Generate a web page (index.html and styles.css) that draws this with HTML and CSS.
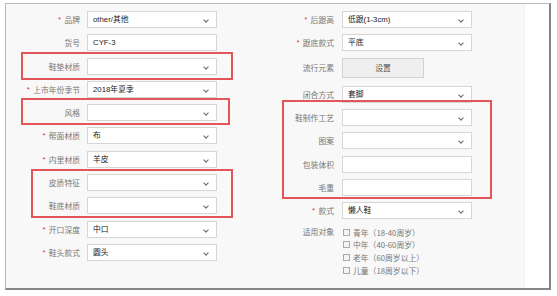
FILE: index.html
```html
<!DOCTYPE html>
<html lang="zh-CN">
<head>
    <meta charset="UTF-8">
    <title>商品属性</title>
    <link rel="stylesheet" href="styles.css">
</head>
<body>
    <div class="panel">
        <div class="form-area">

            <!-- left column -->
            <div class="col col-left">
                <div class="row">
                    <span class="label"><b class="req">*</b>品牌</span>
                    <div class="field select">other/其他<i class="caret"></i></div>
                </div>
                <div class="row">
                    <span class="label">货号</span>
                    <div class="field">CYF-3</div>
                </div>
                <div class="marked mark-1">
                    <div class="row">
                        <span class="label">鞋垫材质</span>
                        <div class="field select"><i class="caret"></i></div>
                    </div>
                </div>
                <div class="row">
                    <span class="label"><b class="req">*</b>上市年份季节</span>
                    <div class="field select">2018年夏季<i class="caret"></i></div>
                </div>
                <div class="marked mark-2">
                    <div class="row">
                        <span class="label">风格</span>
                        <div class="field select"><i class="caret"></i></div>
                    </div>
                </div>
                <div class="row">
                    <span class="label"><b class="req">*</b>帮面材质</span>
                    <div class="field select">布<i class="caret"></i></div>
                </div>
                <div class="row">
                    <span class="label"><b class="req">*</b>内里材质</span>
                    <div class="field select">羊皮<i class="caret"></i></div>
                </div>
                <div class="marked mark-3">
                    <div class="row">
                        <span class="label">皮质特征</span>
                        <div class="field select"><i class="caret"></i></div>
                    </div>
                    <div class="row">
                        <span class="label">鞋底材质</span>
                        <div class="field select"><i class="caret"></i></div>
                    </div>
                </div>
                <div class="row">
                    <span class="label"><b class="req">*</b>开口深度</span>
                    <div class="field select">中口<i class="caret"></i></div>
                </div>
                <div class="row">
                    <span class="label"><b class="req">*</b>鞋头款式</span>
                    <div class="field select">圆头<i class="caret"></i></div>
                </div>
            </div>

            <!-- right column -->
            <div class="col col-right">
                <div class="row">
                    <span class="label"><b class="req">*</b>后跟高</span>
                    <div class="field select">低跟(1-3cm)<i class="caret"></i></div>
                </div>
                <div class="row">
                    <span class="label"><b class="req">*</b>跟底款式</span>
                    <div class="field select">平底<i class="caret"></i></div>
                </div>
                <div class="row row-btn">
                    <span class="label">流行元素</span>
                    <div><button class="btn">设置</button></div>
                </div>
                <div class="row">
                    <span class="label">闭合方式</span>
                    <div class="field select">套脚<i class="caret"></i></div>
                </div>
                <div class="marked mark-4">
                    <div class="row">
                        <span class="label">鞋制作工艺</span>
                        <div class="field select"><i class="caret"></i></div>
                    </div>
                    <div class="row">
                        <span class="label">图案</span>
                        <div class="field select"><i class="caret"></i></div>
                    </div>
                    <div class="row">
                        <span class="label">包装体积</span>
                        <div class="field"></div>
                    </div>
                    <div class="row">
                        <span class="label">毛重</span>
                        <div class="field"></div>
                    </div>
                </div>
                <div class="row">
                    <span class="label"><b class="req">*</b>款式</span>
                    <div class="field select">懒人鞋<i class="caret"></i></div>
                </div>
                <div class="row row-checks">
                    <span class="label">适用对象</span>
                    <div class="checks">
                        <div class="check"><span class="box"></span>青年（18-40周岁）</div>
                        <div class="check"><span class="box"></span>中年（40-60周岁）</div>
                        <div class="check"><span class="box"></span>老年（60周岁以上）</div>
                        <div class="check"><span class="box"></span>儿童（18周岁以下）</div>
                    </div>
                </div>
            </div>

        </div>
        <div class="side-strip"></div>
    </div>
</body>
</html>
```

FILE: styles.css
```css
body {
    margin: 0;
    background: #fff;
    font-family: "Liberation Sans", "Noto Sans CJK SC", sans-serif;
    font-size: 7.8px;
}

.panel {
    display: flex;
    width: 543px;
    height: 284px;
    margin: 3px 0 0 5px;
    border: 1px solid #b8b8b8;
    border-right: 2px solid #858585;
    border-bottom: 2px solid #858585;
}

.form-area {
    flex: 1;
    display: flex;
    padding-top: 7px;
    background: #f8f8f8;
}

.side-strip {
    width: 24px;
    background: #fff;
    border-left: 1px solid #f0f0f0;
}

.col {
    display: flex;
    flex-direction: column;
    gap: 6.3px;
}

.col-left {
    width: 244px;
}

.row {
    display: grid;
    grid-template-columns: 74px 130px;
    column-gap: 7px;
    align-items: center;
}

.col-right .row {
    grid-template-columns: 84px 130px;
    column-gap: 8px;
}

.label {
    text-align: right;
    color: #777;
    font-family: "Noto Sans CJK SC", sans-serif;
    white-space: nowrap;
}

.req {
    color: #e4393c;
    font-weight: normal;
    margin-right: 3px;
}

.field {
    position: relative;
    height: 17px;
    box-sizing: border-box;
    padding: 0 5px;
    border: 1px solid #d6d6d6;
    background: #fff;
    color: #222;
    line-height: 15px;
    white-space: nowrap;
}

.caret {
    position: absolute;
    right: 8px;
    top: 6px;
    width: 3px;
    height: 3px;
    border-right: 1px solid #666;
    border-bottom: 1px solid #666;
    transform: rotate(45deg);
}

.row-btn {
    margin-bottom: 2px;
}

.btn {
    display: block;
    width: 82px;
    height: 20px;
    padding: 0;
    border: 1px solid #d2d2d2;
    background: #efefef;
    color: #555;
    font-family: "Noto Sans CJK SC", sans-serif;
    font-size: 7.8px;
}

.row-checks {
    align-items: start;
}

.row-checks .label {
    line-height: 12.7px;
}

.checks {
    color: #777;
    font-family: "Noto Sans CJK SC", sans-serif;
}

.check {
    display: flex;
    align-items: center;
    height: 12.7px;
    white-space: nowrap;
}

.box {
    width: 5px;
    height: 5px;
    margin: 0 3px 0 1px;
    border: 1px solid #aaa;
    background: #f4f4f4;
}

/* red annotation frames */
.marked {
    position: relative;
    display: flex;
    flex-direction: column;
    gap: 6.3px;
}

.marked::after {
    content: "";
    position: absolute;
    border: 2px solid #e4555a;
    pointer-events: none;
}

.mark-1::after {
    top: -6px;
    bottom: -5px;
    left: 15px;
    right: 17px;
}

.mark-2::after {
    top: -6px;
    bottom: -4px;
    left: 15px;
    right: 20px;
}

.mark-3::after {
    top: -5px;
    bottom: -4px;
    left: 25px;
    right: 17px;
}

.mark-4::after {
    top: -9px;
    bottom: -3px;
    left: 32px;
    right: -20px;
}
```
